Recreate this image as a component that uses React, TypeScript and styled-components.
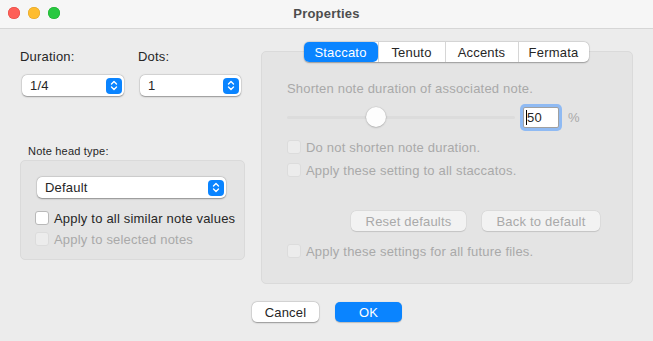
import React from 'react'
import styled, { createGlobalStyle } from 'styled-components'

const GlobalStyle = createGlobalStyle`
  html, body {
    margin: 0;
    padding: 0;
    background: #ececec;
  }
  body {
    font-family: "Liberation Sans", Arial, sans-serif;
    font-size: 13px;
    letter-spacing: 0.2px;
    color: #262626;
  }
`

const Window = styled.div`
  width: 653px;
  height: 341px;
  display: flex;
  flex-direction: column;
  background: #ececec;
  overflow: hidden;
`

const TitleBar = styled.div`
  height: 28px;
  flex-shrink: 0;
  display: flex;
  align-items: center;
  justify-content: center;
  position: relative;
  background: #f6f6f6;
  border-bottom: 1px solid #d6d6d6;
`

const Lights = styled.div`
  position: absolute;
  left: 8px;
  top: 7px;
  display: flex;
  gap: 8px;
`

const Light = styled.span<{ $fill: string; $edge: string }>`
  width: 12px;
  height: 12px;
  border-radius: 50%;
  background: ${({ $fill }) => $fill};
  box-shadow: inset 0 0 0 0.5px ${({ $edge }) => $edge};
`

const Title = styled.div`
  font-weight: 700;
  font-size: 13px;
  color: #4d4d4d;
  margin-top: -2px;
`

const Body = styled.div`
  flex: 1;
  display: flex;
  flex-direction: column;
  padding: 13px 20px 0 20px;
`

const Columns = styled.div`
  display: flex;
  gap: 16px;
`

const LeftColumn = styled.div`
  width: 225px;
  display: flex;
  flex-direction: column;
`

const FieldRow = styled.div<{ $top: number }>`
  display: flex;
  padding-top: ${({ $top }) => $top}px;
`

const Field = styled.div<{ $width: number }>`
  width: ${({ $width }) => $width}px;
  display: flex;
  flex-direction: column;
`

const Label = styled.div`
  font-size: 13px;
  height: 16px;
  line-height: 16px;
  color: #262626;
`

const Popup = styled.div<{ $width: number; $inset?: number }>`
  width: ${({ $width }) => $width}px;
  height: 21px;
  margin-left: ${({ $inset }) => $inset ?? 0}px;
  box-sizing: border-box;
  display: flex;
  align-items: center;
  justify-content: space-between;
  padding: 0 2px 0 8px;
  background: #fff;
  border-radius: 5px;
  box-shadow: 0 0.5px 1.5px rgba(0, 0, 0, 0.35), 0 0 0 0.5px rgba(0, 0, 0, 0.08);
  font-size: 13px;
  color: #262626;
`

const Stepper = styled.span`
  width: 16px;
  height: 16px;
  border-radius: 4px;
  background: #0a84ff;
  display: flex;
  align-items: center;
  justify-content: center;
`

const HeadLabel = styled.div`
  font-size: 11px;
  color: #262626;
  margin: 48px 0 2px 8px;
  line-height: 14px;
`

const Group = styled.div<{ $height: number }>`
  box-sizing: border-box;
  height: ${({ $height }) => $height}px;
  background: #e4e4e4;
  border: 1px solid #dadada;
  border-radius: 5px;
`

const HeadGroup = styled(Group)`
  padding: 16px 0 0 0;
  display: flex;
  flex-direction: column;
`

const CheckList = styled.div`
  padding-left: 14px;
`

const CheckRow = styled.label<{ $disabled?: boolean; $gap?: number }>`
  display: flex;
  align-items: center;
  gap: 5px;
  height: 16px;
  margin-top: ${({ $gap }) => $gap ?? 0}px;
  color: ${({ $disabled }) => ($disabled ? '#a9a9a9' : '#262626')};
  font-size: 13px;
`

const Box = styled.span<{ $disabled?: boolean }>`
  width: 14px;
  height: 14px;
  box-sizing: border-box;
  border-radius: 3px;
  background: ${({ $disabled }) => ($disabled ? '#ececec' : '#fff')};
  border: 1px solid ${({ $disabled }) => ($disabled ? '#dcdcdc' : '#b9b9b9')};
`

const RightColumn = styled.div`
  width: 372px;
  display: flex;
  flex-direction: column;
  align-items: center;
`

const Tabs = styled.div`
  display: flex;
  height: 20px;
  margin-bottom: -11px;
  margin-left: -2px;
  position: relative;
  z-index: 1;
  background: #fff;
  border-radius: 5px;
  box-shadow: 0 0.5px 1.5px rgba(0, 0, 0, 0.3), 0 0 0 0.5px rgba(0, 0, 0, 0.08);
`

const Tab = styled.div<{ $width: number; $active?: boolean }>`
  width: ${({ $width }) => $width}px;
  display: flex;
  align-items: center;
  justify-content: center;
  font-size: 13px;
  color: ${({ $active }) => ($active ? '#fff' : '#262626')};
  background: ${({ $active }) => ($active ? '#0a84ff' : 'transparent')};
  border-radius: ${({ $active }) => ($active ? '5px' : '0')};
  & + & {
    border-left: 1px solid #d6d6d6;
  }
`

const OptionsGroup = styled(Group)`
  width: 372px;
  padding: 29px 0 0 25px;
  display: flex;
  flex-direction: column;
  color: #a9a9a9;
`

const Hint = styled.div`
  height: 16px;
  line-height: 16px;
`

const SliderRow = styled.div`
  display: flex;
  align-items: center;
  margin-top: 10px;
  height: 21px;
`

const Track = styled.div`
  width: 228px;
  height: 3px;
  border-radius: 2px;
  background: #dcdcdc;
  position: relative;
`

const Knob = styled.span`
  position: absolute;
  left: 79px;
  top: -9px;
  width: 20px;
  height: 20px;
  border-radius: 50%;
  background: #fdfdfd;
  box-shadow: 0 0.5px 2px rgba(0, 0, 0, 0.25), 0 0 0 0.5px rgba(0, 0, 0, 0.06);
`

const NumberField = styled.div`
  width: 36px;
  height: 21px;
  box-sizing: border-box;
  margin-left: 8px;
  background: #fff;
  border: 1px solid #a0a0a0;
  box-shadow: 0 0 0 3px #8fbaf3;
  border-radius: 2px;
  display: flex;
  align-items: center;
  padding-left: 2px;
  color: #262626;
  font-size: 13px;
`

const Caret = styled.span`
  width: 1px;
  height: 15px;
  background: #000;
`

const Unit = styled.span`
  margin-left: 9px;
`

const ButtonRow = styled.div`
  display: flex;
  gap: 16px;
  margin: 33px 0 0 64px;
`

const PushButton = styled.div<{ $width: number; $primary?: boolean; $disabled?: boolean }>`
  width: ${({ $width }) => $width}px;
  height: 20px;
  display: flex;
  align-items: center;
  justify-content: center;
  border-radius: 5px;
  font-size: 13px;
  background: ${({ $primary, $disabled }) => ($primary ? '#0a84ff' : $disabled ? '#f2f2f2' : '#fff')};
  color: ${({ $primary, $disabled }) => ($primary ? '#fff' : $disabled ? '#a9a9a9' : '#262626')};
  box-shadow: ${({ $primary, $disabled }) =>
    $primary
      ? '0 0.5px 1px rgba(0, 0, 0, 0.2)'
      : $disabled
        ? '0 0.5px 1px rgba(0, 0, 0, 0.12), 0 0 0 0.5px rgba(0, 0, 0, 0.05)'
        : '0 0.5px 1.5px rgba(0, 0, 0, 0.35), 0 0 0 0.5px rgba(0, 0, 0, 0.08)'};
`

const Footer = styled.div`
  display: flex;
  justify-content: center;
  gap: 16px;
  margin-top: 18px;
  padding-left: 1px;
`

const Chevrons = () => (
  <svg width="8" height="11" viewBox="0 0 8 11" fill="none">
    <path d="M1.5 4 L4 1.5 L6.5 4" stroke="#fff" strokeWidth="1.4" strokeLinecap="round" strokeLinejoin="round" />
    <path d="M1.5 7 L4 9.5 L6.5 7" stroke="#fff" strokeWidth="1.4" strokeLinecap="round" strokeLinejoin="round" />
  </svg>
)

const Select = ({ value, width, inset }: { value: string; width: number; inset?: number }) => (
  <Popup $width={width} $inset={inset}>
    <span>{value}</span>
    <Stepper>
      <Chevrons />
    </Stepper>
  </Popup>
)

const Check = ({ label, disabled, gap }: { label: string; disabled?: boolean; gap?: number }) => (
  <CheckRow $disabled={disabled} $gap={gap}>
    <Box $disabled={disabled} />
    {label}
  </CheckRow>
)

const tabs = [
  { name: 'Staccato', width: 74 },
  { name: 'Tenuto', width: 66 },
  { name: 'Accents', width: 72 },
  { name: 'Fermata', width: 70 },
]

export default function App() {
  return (
    <Window>
      <GlobalStyle />
      <TitleBar>
        <Lights>
          <Light $fill="#fe5f57" $edge="#e0443e" />
          <Light $fill="#febc2e" $edge="#dea123" />
          <Light $fill="#28c840" $edge="#1aab29" />
        </Lights>
        <Title>Properties</Title>
      </TitleBar>
      <Body>
        <Columns>
          <LeftColumn>
            <FieldRow $top={7}>
              <Field $width={118}>
                <Label>Duration:</Label>
              </Field>
              <Field $width={107}>
                <Label>Dots:</Label>
              </Field>
            </FieldRow>
            <FieldRow $top={10}>
              <Field $width={118}>
                <Select value="1/4" width={102} inset={2} />
              </Field>
              <Field $width={107}>
                <Select value="1" width={101} inset={2} />
              </Field>
            </FieldRow>
            <HeadLabel>Note head type:</HeadLabel>
            <HeadGroup $height={100}>
              <Select value="Default" width={189} inset={16} />
              <CheckList>
                <Check label="Apply to all similar note values" gap={12} />
                <Check label="Apply to selected notes" disabled gap={5} />
              </CheckList>
            </HeadGroup>
          </LeftColumn>
          <RightColumn>
            <Tabs>
              {tabs.map((t, i) => (
                <Tab key={t.name} $width={t.width} $active={i === 0}>
                  {t.name}
                </Tab>
              ))}
            </Tabs>
            <OptionsGroup $height={233}>
              <Hint>Shorten note duration of associated note.</Hint>
              <SliderRow>
                <Track>
                  <Knob />
                </Track>
                <NumberField>
                  <Caret />
                  50
                </NumberField>
                <Unit>%</Unit>
              </SliderRow>
              <Check label="Do not shorten note duration." disabled gap={11} />
              <Check label="Apply these setting to all staccatos." disabled gap={7} />
              <ButtonRow>
                <PushButton $width={115} $disabled>Reset defaults</PushButton>
                <PushButton $width={118} $disabled>Back to default</PushButton>
              </ButtonRow>
              <Check label="Apply these settings for all future files." disabled gap={12} />
            </OptionsGroup>
          </RightColumn>
        </Columns>
        <Footer>
          <PushButton $width={67}>Cancel</PushButton>
          <PushButton $width={67} $primary>OK</PushButton>
        </Footer>
      </Body>
    </Window>
  )
}
